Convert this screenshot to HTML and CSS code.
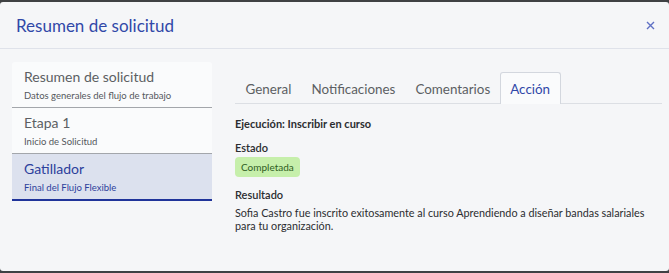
FILE: index.html
```html
<!DOCTYPE html>
<html lang="es">
<head>
    <meta charset="UTF-8">
    <meta name="viewport" content="width=device-width, initial-scale=1.0">
    <title>Resumen de solicitud</title>
    <link rel="stylesheet" href="styles.css">
</head>
<body>
    <div class="modal">
        <div class="modal-header">
            <h2>Resumen de solicitud</h2>
            <button class="close" aria-label="Cerrar">
                <svg width="9" height="9" viewBox="0 0 9 9"><path d="M1 1L8 8M8 1L1 8" stroke="currentColor" stroke-width="1.4" fill="none"/></svg>
            </button>
        </div>
        <div class="modal-body">
            <div class="steps">
                <div class="step">
                    <div class="step-title">Resumen de solicitud</div>
                    <div class="step-sub">Datos generales del flujo de trabajo</div>
                </div>
                <div class="step">
                    <div class="step-title">Etapa 1</div>
                    <div class="step-sub">Inicio de Solicitud</div>
                </div>
                <div class="step active">
                    <div class="step-title">Gatillador</div>
                    <div class="step-sub">Final del Flujo Flexible</div>
                </div>
            </div>
            <div class="content">
                <div class="tabs">
                    <div class="tab">General</div>
                    <div class="tab">Notificaciones</div>
                    <div class="tab">Comentarios</div>
                    <div class="tab active">Acción</div>
                </div>
                <div class="pane">
                    <div class="heading">Ejecución: Inscribir en curso</div>
                    <div class="label">Estado</div>
                    <span class="badge">Completada</span>
                    <div class="label result-label">Resultado</div>
                    <p class="result">Sofia Castro fue inscrito exitosamente al curso Aprendiendo a diseñar bandas salariales para tu organización.</p>
                </div>
            </div>
        </div>
    </div>
</body>
</html>
```

FILE: styles.css
```css
body {
    margin: 0;
    background: #3f4144;
    font-family: Lato, "Open Sans", sans-serif;
}
.modal {
    margin-top: 2px;
    height: 269px;
    background: #f5f6f8;
    border-radius: 3px;
}
.modal-header {
    height: 46px;
    border-bottom: 1px solid #dfe2ea;
    display: flex;
    align-items: center;
    justify-content: space-between;
    padding: 0 10px 0 16px;
}
.modal-header h2 {
    margin: 0;
    font-size: 17px;
    font-weight: 400;
    color: #3148a8;
}
.close {
    background: none;
    border: none;
    color: #5f70c4;
    padding: 4px;
    display: flex;
    cursor: pointer;
}
.modal-body {
    display: flex;
    padding: 13px 4px 0 12px;
    gap: 23px;
}
.steps {
    width: 200px;
    flex-shrink: 0;
    align-self: flex-start;
    background: #fafbfc;
    border-radius: 3px 3px 0 0;
}
.step {
    height: 45px;
    padding: 0 12px;
    border-bottom: 1px solid #a3a6ab;
}
.step-title {
    font-size: 14px;
    color: #5c5f63;
    padding-top: 6px;
    line-height: 18px;
}
.step-sub {
    font-size: 9.5px;
    color: #55585d;
    margin-top: 4px;
}
.step.active {
    background: #dce1ee;
    border-bottom: 2px solid #20349a;
}
.step.active .step-title,
.step.active .step-sub {
    color: #2c3f9c;
}
.content {
    flex: 1;
    padding-top: 10px;
}
.tabs {
    display: flex;
    border-bottom: 1px solid #dcdfe4;
    height: 31px;
    margin-right: 3px;
}
.tab {
    padding: 8px 9.5px 0;
    font-size: 13.4px;
    color: #5c5f63;
    margin-right: -1px;
    border: 1px solid transparent;
    border-bottom: none;
}
.tab.active {
    color: #3148a8;
    background: #fafbfc;
    border-color: #d3d7de;
    border-radius: 3px 3px 0 0;
    margin-bottom: -1px;
}
.pane {
    padding-top: 13px;
    font-size: 11px;
    color: #2b2d30;
}
.heading {
    font-weight: 700;
    margin-bottom: 11px;
}
.label {
    font-weight: 600;
    margin-bottom: 3px;
}
.result-label {
    margin-bottom: 5px;
}
.badge {
    display: inline-block;
    background: #c6efab;
    color: #2f5e1e;
    font-size: 10px;
    padding: 4px 6px;
    border-radius: 4px;
    margin-bottom: 11px;
}
.result {
    margin: 0;
    line-height: 13px;
    font-size: 10.8px;
}
```
